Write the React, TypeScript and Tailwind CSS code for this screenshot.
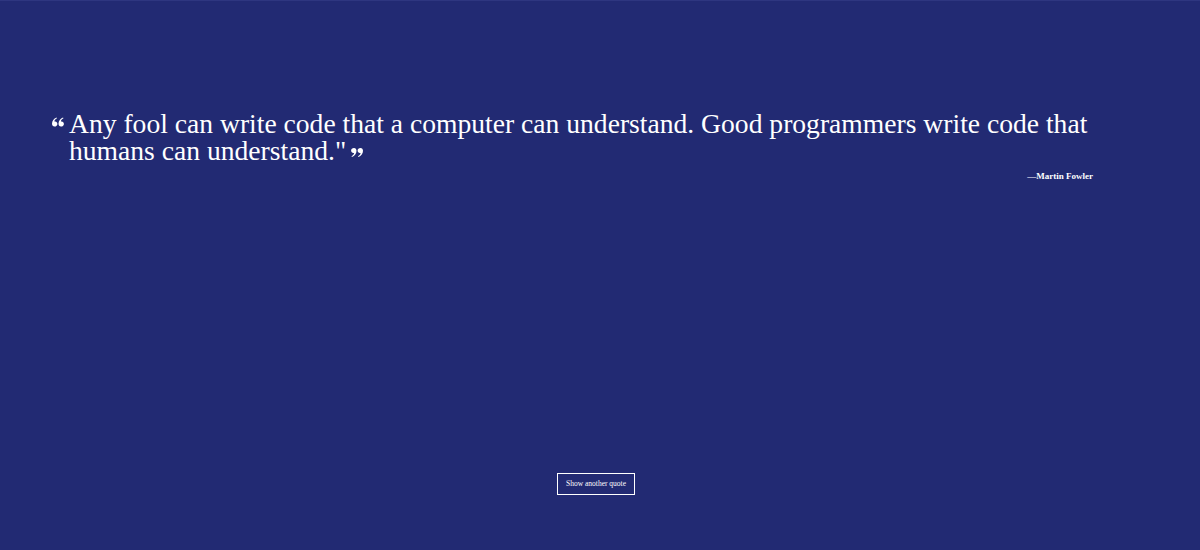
import React from 'react';

const QuoteMark: React.FC<{ flip?: boolean; className?: string }> = ({ flip, className }) => (
  <svg viewBox="0 0 24 18" className={className} fill="currentColor" style={flip ? { transform: 'rotate(180deg)' } : undefined}>
    <path d="M5 18c-3 0-5-2.4-5-5.6C0 7 3.6 2 9 0l1 1.6C6.6 3.4 5 5.8 4.8 8c.4-.1.8-.2 1.4-.2 2.6 0 4.6 2 4.6 5s-2.4 5.2-5.8 5.2zm13 0c-3 0-5-2.4-5-5.6C13 7 16.6 2 22 0l1 1.6C19.6 3.4 18 5.8 17.8 8c.4-.1.8-.2 1.4-.2 2.6 0 4.6 2 4.6 5S21.4 18 18 18z" />
  </svg>
);

const App: React.FC = () => {
  return (
    <div className="h-screen w-full bg-[#222a73] border-t border-[#2e3680] flex flex-col text-white font-['Liberation_Serif',serif]">
      <div className="pt-[109px] pl-[52px] pr-[107px]">
        <blockquote className="flex items-start gap-[5px]">
          <QuoteMark className="w-[12px] h-[10px] mt-[7px] shrink-0" />
          <p className="text-[27.6px] leading-[27px] max-w-[1030px]">
            Any fool can write code that a computer can understand. Good programmers write code that humans can understand."
            <QuoteMark flip className="inline-block w-[12px] h-[9px] ml-[5px] align-[3px]" />
          </p>
        </blockquote>
        <p className="text-right text-[9px] font-bold mt-[6px]">—Martin Fowler</p>
      </div>
      <div className="flex-1" />
      <div className="flex justify-center pb-[55px] pr-[8px]">
        <button className="border border-white px-[8px] h-[22px] text-[7.5px] text-white">Show another quote</button>
      </div>
    </div>
  );
};

export default App;
